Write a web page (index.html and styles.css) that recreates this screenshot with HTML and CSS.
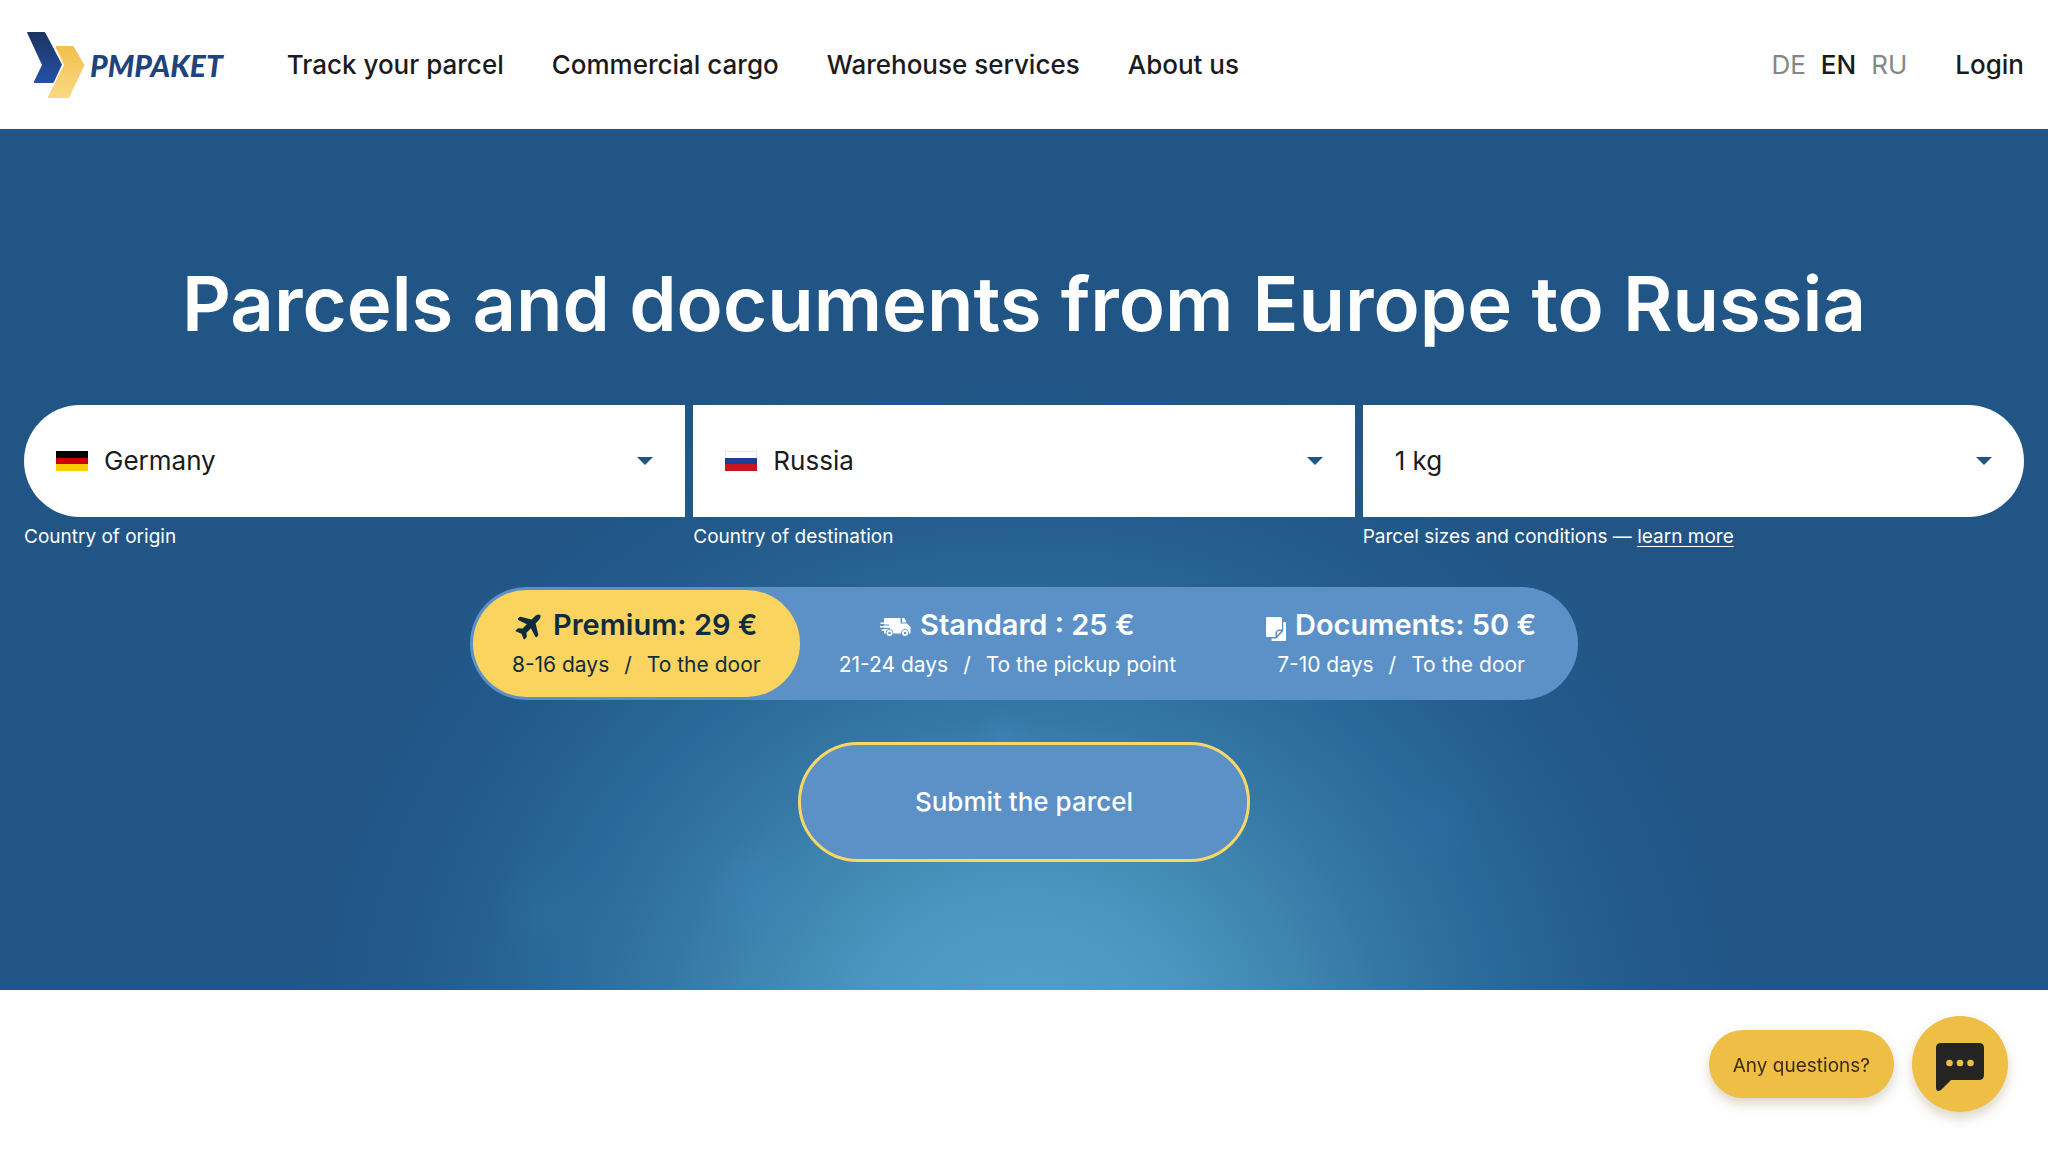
FILE: index.html
```html
<!DOCTYPE html>
<html lang="en">
<head>
<meta charset="utf-8">
<meta name="viewport" content="width=device-width, initial-scale=1">
<title>PMPAKET</title>
<link rel="stylesheet" href="styles.css">
</head>
<body>
<header class="header">
  <a class="logo" href="#" aria-label="PMPAKET">
    <svg class="logo-mark" viewBox="0 0 60 68" aria-hidden="true">
      <defs>
        <linearGradient id="navy" x1="0" y1="0" x2="0" y2="1"><stop offset="0" stop-color="#1b335f"/><stop offset="1" stop-color="#2452a8"/></linearGradient>
        <linearGradient id="gold" x1="0" y1="0" x2="0" y2="1"><stop offset="0" stop-color="#f3bf4d"/><stop offset="1" stop-color="#f8da85"/></linearGradient>
      </defs>
      <path fill="url(#navy)" d="M1 1.500Q1 1 2 1H18Q19 1 19.500 2L36 33.500L28 51Q27.500 52 26.500 52H9Q7.500 52 8 50.500L16 34Z"/>
      <path fill="url(#gold)" d="M29.500 16Q29.500 15 31 15H46.500Q47.500 15 48 16L58.500 34L43.500 66Q43 67 42 67H23Q21.500 67 22 65.500L38 34Z"/>
    </svg>
    <span class="logo-text">PMPAKET</span>
  </a>
  <nav class="nav">
    <a href="#">Track your parcel</a>
    <a href="#">Commercial cargo</a>
    <a href="#">Warehouse services</a>
    <a href="#">About us</a>
  </nav>
  <div class="languages">
    <a href="#">DE</a>
    <a class="current" href="#">EN</a>
    <a href="#">RU</a>
  </div>
  <a class="login" href="#">Login</a>
</header>
<main class="hero">
  <h1 class="title">Parcels and documents from Europe to Russia</h1>
  <form class="calculator">
    <div class="fields">
      <div class="field">
        <div class="control first">
          <svg class="flag" viewBox="0 0 32 20" preserveAspectRatio="none" aria-hidden="true"><path d="M0 0h32v7H0z"/><path fill="#d00000" d="M0 7h32v6H0z"/><path fill="#fc0" d="M0 13h32v7H0z"/></svg>
          <select id="origin"><option>Germany</option></select>
          <svg class="arrow" viewBox="0 0 16 8" aria-hidden="true"><path d="M0 0h16L8 8z"/></svg>
        </div>
        <label class="caption" for="origin">Country of origin</label>
      </div>
      <div class="field">
        <div class="control">
          <svg class="flag" viewBox="0 0 32 20" preserveAspectRatio="none" aria-hidden="true"><path fill="#e4e8ee" d="M0 0h32v20H0z"/><path fill="#fff" d="M1 1h30v6H1z"/><path fill="#1c3f94" d="M0 7h32v6H0z"/><path fill="#c4161c" d="M0 13h32v7H0z"/></svg>
          <select id="destination"><option>Russia</option></select>
          <svg class="arrow" viewBox="0 0 16 8" aria-hidden="true"><path d="M0 0h16L8 8z"/></svg>
        </div>
        <label class="caption" for="destination">Country of destination</label>
      </div>
      <div class="field">
        <div class="control last">
          <select id="weight"><option>1 kg</option></select>
          <svg class="arrow" viewBox="0 0 16 8" aria-hidden="true"><path d="M0 0h16L8 8z"/></svg>
        </div>
        <div class="caption"><label for="weight">Parcel sizes and conditions</label> — <a href="#">learn more</a></div>
      </div>
    </div>
    <div class="rates">
      <button class="rate selected" type="button">
        <span class="rate-name"><svg class="icon plane" viewBox="0 0 26 26" aria-hidden="true"><path d="M16.500 5.500L20.500 1.800Q23.500 -.3 25.200 .9Q26.400 2.600 24.300 5.500L20.600 9.500L23.300 20.500Q23.300 22 21.500 23.200Q20.400 23.300 20 22.300L16 14.300L11.500 18.700L11.800 23L9.800 25.300Q9 25.700 8.500 24.700L6.500 19.700L1.200 17.600Q.3 17 .8 16.200L3 14.200L7.500 14.500L11.800 10.200L3.600 6.200Q2.700 5.500 3 4.600Q4 2.900 5.600 2.700Z"/></svg>Premium: 29 €</span>
        <span class="rate-info"><span>8-16 days</span><span>/</span><span>To the door</span></span>
      </button>
      <button class="rate" type="button">
        <span class="rate-name"><svg class="icon" viewBox="0 0 31 20" aria-hidden="true"><path d="M5 1H20.500V6.500H27L30.500 10V16.500H4V14H1.500V12.500H4V10.500H0V9H4V7H.5V5.500H4V2Q4 1 5 1Z"/><path d="M22 1H23.500Q24.500 1 25 2L26.500 5.500H22Z"/><g class="cut"><path d="M0 7.500h9v1H0zM1 11h9v1H1z"/><circle cx="9.500" cy="16" r="3.800"/><circle cx="25" cy="16" r="3.800"/></g><circle cx="9.500" cy="16" r="3"/><circle cx="25" cy="16" r="3"/><g class="cut"><circle cx="9.500" cy="16" r="1.200"/><circle cx="25" cy="16" r="1.200"/></g></svg>Standard : 25 €</span>
        <span class="rate-info"><span>21-24 days</span><span>/</span><span>To the pickup point</span></span>
      </button>
      <button class="rate documents" type="button">
        <span class="rate-name"><svg class="icon doc" viewBox="0 0 20 24" aria-hidden="true"><path d="M1.200 0H14.800Q16 0 16 1.200V12.500H12L9.500 15V20H1.200Q0 20 0 18.800V1.200Q0 0 1.200 0Z"/><path d="M15 14L11 18.500V15L12.500 14Z"/><path d="M17.300 5H19Q20 5 20 6V22.800Q20 24 18.800 24H6.500Q5.500 24 5.500 22.800V21.500H10.500L17.300 14Z"/></svg>Documents: 50 €</span>
        <span class="rate-info"><span>7-10 days</span><span>/</span><span>To the door</span></span>
      </button>
    </div>
    <button class="submit" type="submit">Submit the parcel</button>
  </form>
</main>
<div class="chat">
  <button class="chat-label" type="button">Any questions?</button>
  <button class="chat-button" type="button" aria-label="Open chat">
    <svg viewBox="0 0 48 48" aria-hidden="true"><path fill="#242522" d="M5 0H43Q48 0 48 5V32Q48 37 43 37H15L5 47Q0 50 0 44V5Q0 0 5 0Z"/><g fill="#eebe45"><circle cx="13.500" cy="20" r="3.300"/><circle cx="24" cy="20" r="3.300"/><circle cx="34.500" cy="20" r="3.300"/></g></svg>
  </button>
</div>
</body>
</html>
```
FILE: styles.css
```css
* { box-sizing: border-box; }
body { margin: 0; background: #fff; color: #1b1b1b; font: 400 26px/32px Inter, sans-serif; }
a { color: inherit; text-decoration: none; }
button, select { font: inherit; color: inherit; }

.header { display: flex; align-items: center; height: 129px; padding: 0 24px; font-weight: 500; }
.logo { display: flex; align-items: center; gap: 4px; color: #1d447c; margin-right: 64px; }
.logo-mark { width: 60px; height: 68px; margin-left: 2px; }
.logo-text { font: italic 900 30px/32px Lato, sans-serif; color: #1d447c; }
.nav { display: flex; gap: 48px; flex: 1; }
.languages { display: flex; gap: 15px; margin-right: 48px; color: #868686; font-weight: 400; }
.languages .current { color: #1b1b1b; font-weight: 500; }

.hero {
  padding: 124px 24px 128px;
  color: #fff;
  background:
    radial-gradient(circle at 70% 81%, #2b6da880 0, #2b6da800 48px),
    radial-gradient(circle at 49% 71%, #3a88bb80 0, #3a88bb00 32px),
    radial-gradient(circle at 37% 89%, #3b85b866 0, #3b85b800 60px),
    radial-gradient(circle at 27% 91%, #2f729f66 0, #2f729f00 60px),
    radial-gradient(ellipse 760px 720px at 50% 108%, #559fca 0, #4d98c3 20%, #3f87b1 36%, #3375a3 50%, #296898 64%, #235b8c 80%, #21558600 100%),
    #215586;
}
.title { margin: 0 0 52px; text-align: center; font: 600 76px/100px Inter, sans-serif; }
.calculator { display: flex; flex-direction: column; align-items: center; }
.fields { display: grid; grid-template-columns: repeat(3, 1fr); gap: 8px; width: 100%; }
.control { display: flex; align-items: center; height: 112px; padding: 0 32px; gap: 16px; background: #fff; color: #1b1b1b; }
.control.first { border-radius: 56px 0 0 56px; }
.control.last { border-radius: 0 56px 56px 0; }
.control select { flex: 1; min-width: 0; height: 100%; padding: 0; border: 0; background: none; appearance: none; }
.flag { width: 32px; height: 20px; }
.arrow { width: 16px; height: 8px; fill: #215586; }
.caption { display: block; margin-top: 8px; font-size: 19px; line-height: 24px; }
.caption a { text-decoration: underline; text-underline-offset: 3px; }

.rates { display: flex; margin-top: 38px; padding: 3px; border-radius: 57px; background: #5c91c7; }
.rate { display: flex; flex-direction: column; align-items: center; gap: 8px; padding: 17px 39px 18px; border: 0; border-radius: 54px; background: none; color: #fff; }
.rate.selected { background: #fbd35f; color: #0f2c3f; }
.rate.documents { margin-left: 12px; }
.rate-name { display: flex; align-items: center; gap: 9px; font-size: 29px; line-height: 36px; font-weight: 600; }
.rate-info { display: flex; gap: 15px; font-size: 21px; line-height: 28px; }
.icon { width: 31px; height: 20px; margin-top: 4px; fill: currentColor; }
.icon .cut { fill: #5c91c7; }
.icon.plane { width: 26px; height: 26px; margin-right: 3px; }
.icon.doc { width: 20px; height: 24px; margin-top: 7px; }
.submit { width: 452px; height: 120px; margin-top: 42px; border: 3px solid #f8d766; border-radius: 60px; background: #5c91c7; color: #fff; font-weight: 500; }

.chat { position: fixed; right: 40px; bottom: 40px; display: flex; align-items: center; gap: 18px; }
.chat button { border: 0; background: #eebe45; color: #3d2b12; box-shadow: 0 6px 12px #6b5b2040; }
.chat .chat-label { height: 68px; padding: 3px 24px 0; border-radius: 34px; font-size: 19px; }
.chat .chat-button { display: flex; align-items: center; justify-content: center; width: 96px; height: 96px; padding: 6px 0 0; border-radius: 50%; }
.chat-button svg { width: 48px; height: 48px; }
```
